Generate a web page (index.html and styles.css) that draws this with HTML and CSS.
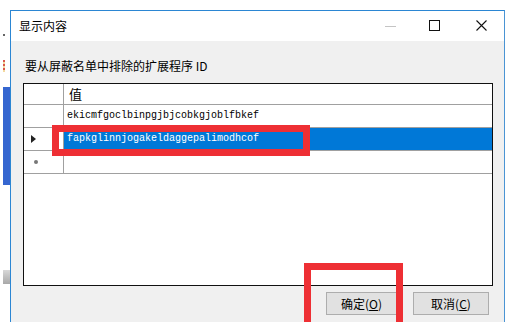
FILE: index.html
```html
<!DOCTYPE html>
<html lang="zh-CN">
<head>
    <meta charset="UTF-8">
    <meta name="viewport" content="width=device-width, initial-scale=1.0">
    <title>显示内容</title>
    <link rel="stylesheet" href="styles.css">
</head>
<body>
    <!-- app behind the dialog -->
    <div class="behind">
        <span class="tick"></span>
        <span class="dots"></span>
        <span class="app-bar"></span>
        <span class="app-grip"></span>
    </div>

    <div class="dialog">
        <header class="titlebar">
            <span class="title">显示内容</span>
            <div class="controls">
                <span class="ctl ctl-min"><svg width="12" height="12" viewBox="0 0 12 12"><path d="M0 6.5h11" stroke="#c4c4c4" stroke-width="1"/></svg></span>
                <span class="ctl ctl-max"><svg width="12" height="12" viewBox="0 0 12 12"><rect x="0.5" y="0.5" width="10" height="10" fill="none" stroke="#111" stroke-width="1"/></svg></span>
                <span class="ctl ctl-close"><svg width="12" height="12" viewBox="0 0 12 12"><path d="M0.5 0.5l10 10M10.5 0.5l-10 10" stroke="#111" stroke-width="1.1"/></svg></span>
            </div>
        </header>

        <section class="content">
            <p class="prompt">要从屏蔽名单中排除的扩展程序 ID</p>

            <div class="grid">
                <div class="row row-head">
                    <div class="rh"></div>
                    <div class="cell">值</div>
                </div>
                <div class="row">
                    <div class="rh"></div>
                    <div class="cell mono">ekicmfgoclbinpgjbjcobkgjoblfbkef</div>
                </div>
                <div class="row selected">
                    <div class="rh"><span class="arrow"></span></div>
                    <div class="cell mono">fapkglinnjogakeldaggepalimodhcof</div>
                </div>
                <div class="row">
                    <div class="rh"><span class="new-dot"></span></div>
                    <div class="cell"></div>
                </div>
                <div class="mark mark-row"></div>
            </div>

            <div class="buttons">
                <button class="btn">确定(<u>O</u>)</button>
                <button class="btn">取消(<u>C</u>)</button>
            </div>
        </section>

        <div class="mark mark-ok"></div>
    </div>
</body>
</html>
```

FILE: styles.css
```css
html, body {
    height: 100%;
    overflow: hidden;
}

body {
    margin: 0;
    padding: 10px 0 0 10px;
    box-sizing: border-box;
    background: #ffffff;
    font-family: "Noto Sans CJK SC", "Liberation Sans", sans-serif;
    font-size: 12px;
    color: #000;
    position: relative;
}

.behind span {
    position: absolute;
    left: 3px;
    width: 7px;
}

.tick {
    top: 34px;
    height: 2px;
    width: 2px !important;
    background: #666;
}

.dots {
    top: 60px;
    height: 12px;
    width: 2px !important;
    background: repeating-linear-gradient(#d9584a 0 2px, #f4d9a0 2px 4px);
}

.app-bar {
    top: 87px;
    height: 98px;
    background: #3566d0;
}

.app-grip {
    top: 270px;
    height: 14px;
    background: linear-gradient(#d8d8d8, #a8a8a8);
}

.dialog {
    position: relative;
    width: 493px;
    height: 311px;
    border: 1px solid #2b86d3;
    border-bottom: none;
    border-right-color: #4a94d4;
    background: #f0f0f0;
}

.titlebar {
    height: 30px;
    background: #ffffff;
    display: flex;
    align-items: center;
    justify-content: space-between;
}

.title {
    padding-left: 8px;
    font-size: 12px;
    line-height: 16px;
}

.controls {
    display: flex;
    align-items: center;
    height: 100%;
}

.ctl {
    display: flex;
    align-items: center;
    justify-content: center;
    height: 100%;
}

.ctl svg {
    display: block;
}

.ctl-min {
    width: 12px;
    margin-right: 32px;
}

.ctl-max {
    width: 12px;
    margin-right: 35px;
}

.ctl-close {
    width: 12px;
    margin-right: 16px;
}

.content {
    padding: 0 0 0 12px;
}

.prompt {
    margin: 0;
    padding: 17px 0 0 2px;
    line-height: 16px;
    height: 25px;
}

.grid {
    position: relative;
    width: 468px;
    height: 201px;
    border: 1px solid #111;
    background: #ffffff;
}

.row {
    display: flex;
    height: 22px;
    border-bottom: 1px solid #a0a0a0;
}

.row-head {
    height: 20px;
}

.rh {
    width: 40px;
    flex: none;
    border-right: 1px solid #a0a0a0;
    display: flex;
    align-items: center;
    padding-left: 7px;
    box-sizing: border-box;
}

.cell {
    flex: 1;
    display: flex;
    align-items: center;
    padding-left: 3px;
    line-height: 14px;
}

.row-head .cell {
    padding-left: 5px;
    font-size: 13px;
}

.mono {
    font-family: "Liberation Mono", "DejaVu Sans Mono", monospace;
    font-size: 10px;
}

.selected .cell {
    background: #0078d7;
    color: #ffffff;
}

.arrow {
    width: 0;
    height: 0;
    border-top: 4px solid transparent;
    border-bottom: 4px solid transparent;
    border-left: 5px solid #222;
}

.new-dot {
    width: 4px;
    height: 4px;
    margin-left: 3px;
    border-radius: 50%;
    background: #777;
}

.buttons {
    display: flex;
    gap: 16px;
    padding: 6px 0 0 303px;
}

.btn {
    width: 71px;
    height: 23px;
    padding: 0;
    border: 1px solid #adadad;
    background: #e1e1e1;
    font-family: "Noto Sans CJK SC", "Liberation Sans", sans-serif;
    font-size: 12px;
    color: #000;
}

.btn + .btn {
    width: 76px;
}

.btn u {
    text-decoration: underline;
}

/* red annotation boxes drawn over the screenshot */
.mark {
    position: absolute;
    border: 7px solid #ee2f34;
    box-sizing: border-box;
    pointer-events: none;
}

.mark-row {
    left: 28px;
    top: 41px;
    width: 258px;
    height: 31px;
}

.mark-ok {
    left: 293px;
    top: 252px;
    width: 99px;
    height: 66px;
}
```
